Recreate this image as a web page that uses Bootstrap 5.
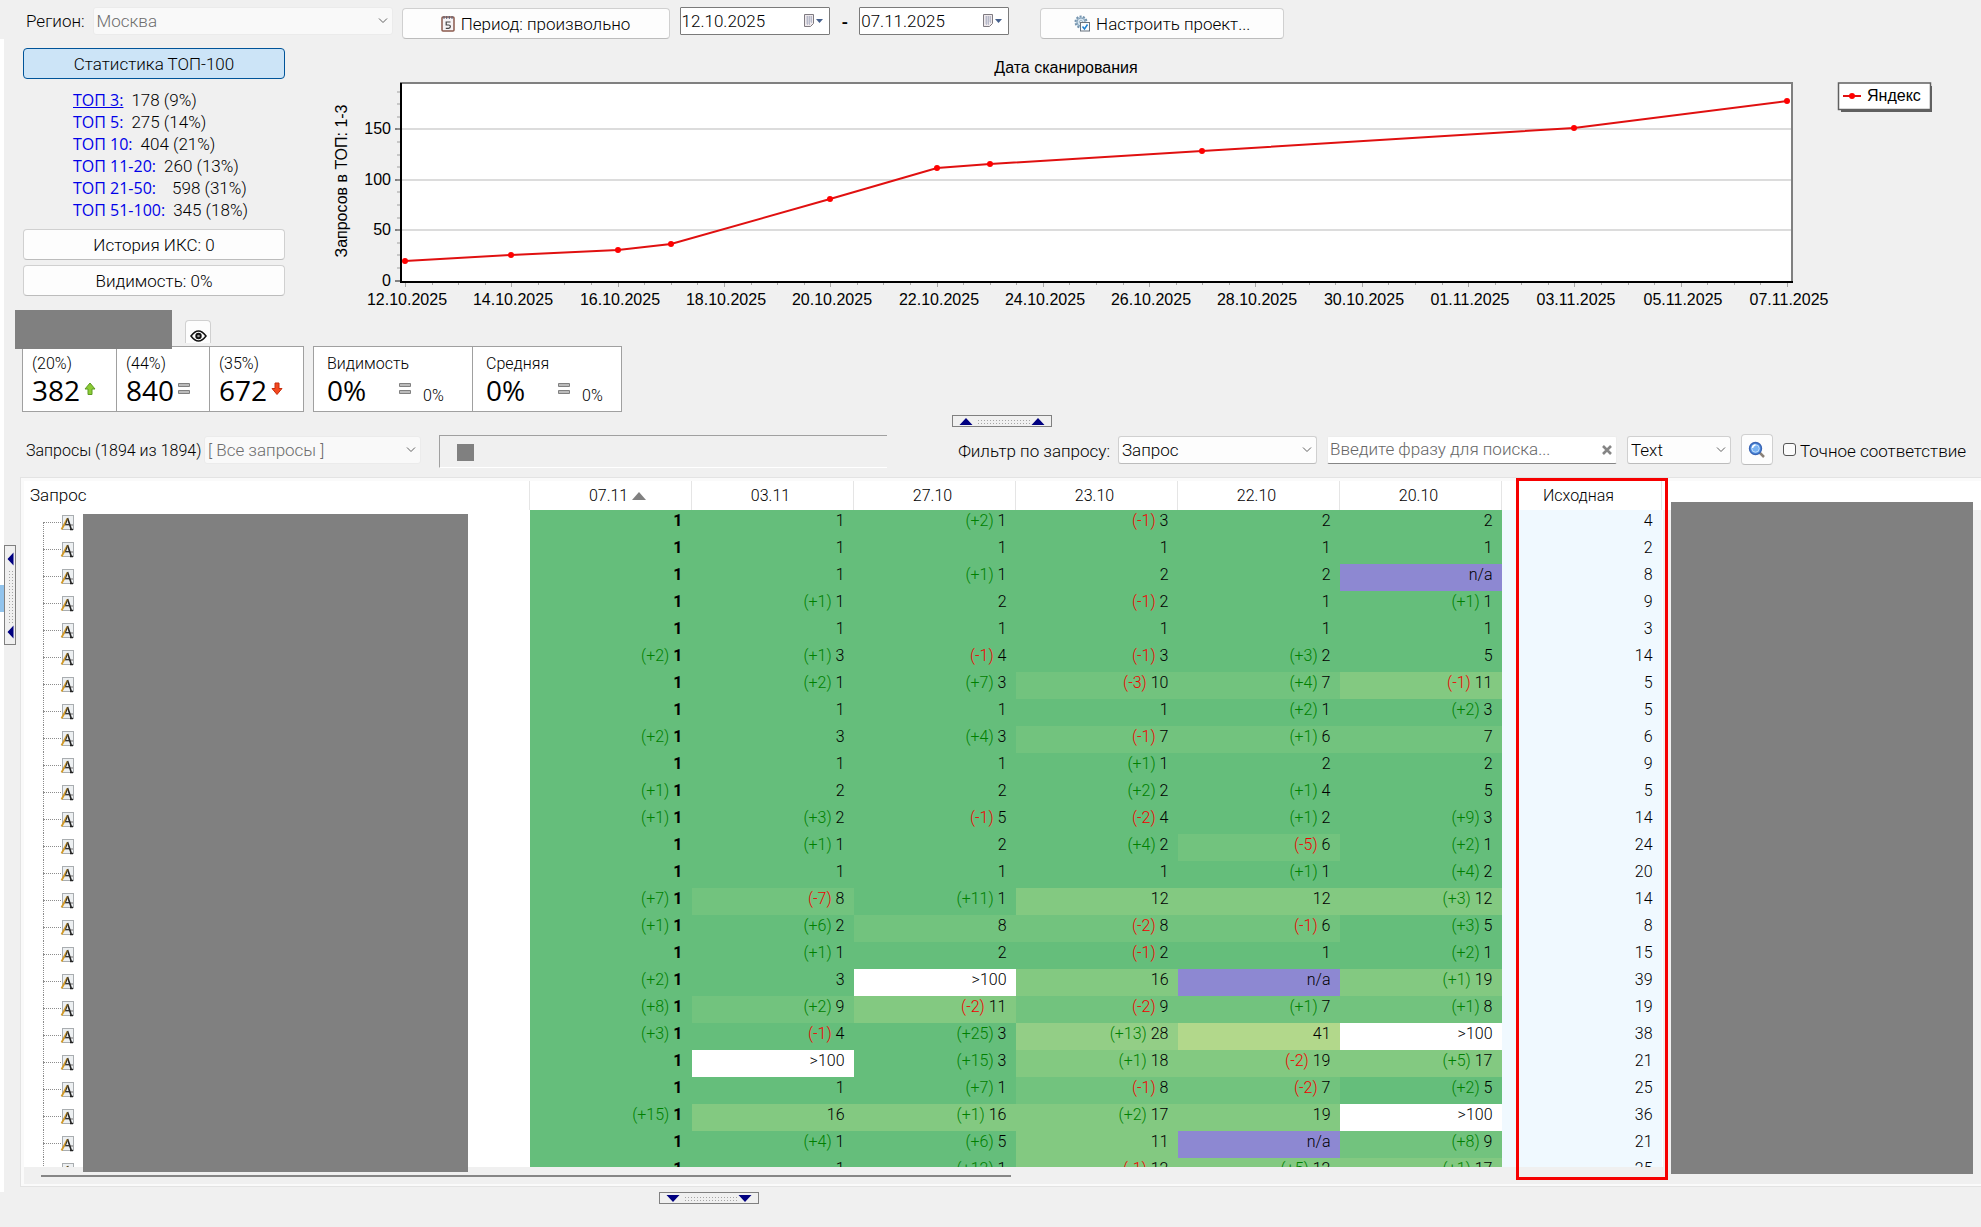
<!DOCTYPE html>
<html lang="ru">
<head>
<meta charset="utf-8">
<meta name="viewport" content="width=device-width, initial-scale=1">
<title>Позиции сайта</title>
<link href="https://cdn.jsdelivr.net/npm/bootstrap@5.3.0/dist/css/bootstrap.min.css" rel="stylesheet">
<style>
  body { background: #f0f0f0; color: #000; font: 300 17px/20px Roboto, "Open Sans", sans-serif; overflow: hidden; }
  .app { min-width: 1200px; }
  .gutter { width: 16px; position: relative; }
  .gutter-strip { position: absolute; left: 0; top: 39px; bottom: 0; width: 4px; background: #fff; }
  .gutter-mark { position: absolute; left: 0; top: 585px; width: 4px; height: 27px; background: #91c3ec; }
  .grip { position: relative; background: #f0f0f0; border: 1px solid #808080; padding: 0; display: block; flex: none; }
  .grip svg { display: block; }
  .grip-h { width: 100px; height: 12px; }
  .grip-v { width: 12px; height: 100px; margin-left: 4px; margin-bottom: 2px; }

  .ctl { font: inherit; color: #000; background-color: #fdfdfd; border: 1px solid #d0d0d0; border-bottom-color: #bcbcbc; border-radius: 4px; padding: 0; }
  .ctl-btn { height: 31px; display: flex; align-items: center; justify-content: center; gap: 6px; }
  .ctl-on { background: #cce4f7; border-color: #005499; }
  .ctl-select { height: 28px; border-radius: 3px; appearance: none; padding: 0 24px 0 3px; background: #fdfdfd url("data:image/svg+xml,%3Csvg xmlns='http://www.w3.org/2000/svg' width='10' height='6'%3E%3Cpath d='M1 .5l4 4 4-4' fill='none' stroke='%23606060'/%3E%3C/svg%3E") no-repeat right 4px center; }
  .ctl-select:disabled { color: #6d6d6d; background-color: #f9f9f9; border-color: #ebebeb; opacity: 1; }
  .date-box { width: 150px; height: 28px; background: #fff; border: 1px solid #7a7a7a; border-radius: 1px; }
  .date-box input { border: 0; outline: 0; background: none; font: inherit; font-size: 17px; width: 100px; padding: 0 0 0 1px; }
  .date-box button { border: 0; background: none; padding: 0; display: flex; margin-right: 6px; }

  .toolbar { padding: 7px 0 0 10px; height: 43px; }
  .side { width: 262px; margin: 6px 0 0 7px; }
  .top-list { margin: 10px 0 8px 50px; }
  .top-list li { height: 22px; line-height: 22px; display: flex; }
  .top-list a { font: 400 16px/22px "Open Sans", "Noto Sans", sans-serif; color: #0000e8; text-decoration: none; }
  .top-list a.current { text-decoration: underline; }
  .chart { font: 400 16px "Liberation Sans", Arial, sans-serif; }
  .masked { background: #808080; }
  .mask-title { width: 157px; height: 39px; margin: 0 0 -3px -1px; position: relative; z-index: 1; }
  .eye-btn { width: 26px; height: 23px; margin: 10px 0 0 13px; border-bottom: 0; border-radius: 4px 4px 0 0; padding: 7px 0 0; }
  .stat-row { padding-left: 6px; font-size: 16px; }
  .stat-group { background: #fff; border: 1px solid #a0a0a0; height: 66px; }
  .stat-cell { padding: 7px 0 0 9px; }
  .stat-cell + .stat-cell { border-left: 1px solid #a0a0a0; }
  .stat-main { font: 400 28px/32px "Open Sans", "Noto Sans", sans-serif; }
  .stat-wide { padding-left: 13px; }
  .stat-wide .stat-main { width: 72px; }

  .filters { height: 38px; padding: 0 15px 0 10px; }
  .filters label { padding-top: 2px; }
  .count-label { width: 178px; font-size: 16px; }
  .tag-panel { border: 1px solid #a0a0a0; border-right: 0; border-bottom-color: #fff; height: 33px; padding: 8px 17px; }
  .tag-box { width: 17px; height: 17px; }
  .find-box { height: 28px; background: #fff; border: 1px solid #ececec; border-bottom: 1px solid #868686; border-radius: 2px; }
  .find-box input { border: 0; outline: 0; background: none; font: inherit; padding: 0 0 2px 2px; min-width: 0; }
  .find-box input::placeholder { color: #666; opacity: 1; }
  .find-box button { border: 0; background: none; padding: 0 3px; display: flex; }
  .exact { width: 13px; height: 13px; margin: 0; appearance: none; background: #fbfbfb; border: 1px solid #555; border-radius: 3px; }

  .grid-panel { margin: 9px 0 5px 4px; border: 1px solid #e3e3e3; border-right: 0; padding: 3px 0 2px 3px; background: #fafafa; position: relative; }
  .grid-body { background: #fff; }
  .name-pane { width: 505px; position: relative; }
  .pane-head { height: 29px; line-height: 26px; padding: 1px 0 0 6px; }
  .tree { width: 59px; overflow: hidden; }
  .tree-row { height: 27px; position: relative; padding: 5px 0 0 35px; }
  .tree-row::before { content: ""; position: absolute; left: 19px; top: 0; height: 27px; border-left: 1px dotted #8c8c8c; }
  .tree-row:first-child::before { top: 13px; height: 14px; }
  .tree-row::after { content: ""; position: absolute; left: 19px; top: 13px; width: 18px; border-top: 1px dotted #8c8c8c; }
  .tree-row svg { display: block; position: relative; z-index: 1; }
  .mask-names { width: 385px; margin: 5px 0 -5px 0; z-index: 1; position: relative; }
  .pos-wrap { width: 1134px; overflow: hidden; }
  .pos { width: 1133px; table-layout: fixed; border-collapse: collapse; font-size: 16px; }
  .pos th { height: 29px; font-weight: 300; text-align: center; padding: 0 4px 0 0; border-left: 1px solid #e5e5e5; line-height: 20px; }
  .pos th:first-child { padding-left: 18px; }
  .pos th:last-child { border-right: 1px solid #e5e5e5; padding-right: 6px; }
  .pos td { height: 27px; padding: 0 9px 0 0; text-align: right; vertical-align: top; line-height: 22px; white-space: nowrap; }
  .pos td:first-child { font-weight: 700; }
  .pos span { font-weight: 300; }
  .pos .up { color: #008000; }
  .pos .down { color: #f00000; }
  .b0 { background: #65be7b; } .b1 { background: #72c37e; } .b2 { background: #83c981; }
  .b3 { background: #93ce86; } .b4 { background: #b2d88b; } .bx { background: #fff; }
  .bn { background: #8d88d2; } .bs { background: #f0f9ff; }
  .rest-pane { background: #f0f0f0; border-top: 29px solid #fff; }
  .mask-rest { margin: -8px 8px -7px 8px; position: relative; z-index: 1; }
  .scroll-x { height: 17px; background: #f0f0f0; padding: 8px 0 0 17px; }
  .scroll-thumb { width: 50%; height: 2px; background: #868686; }
  .frame-red { position: absolute; top: 0; left: 1495px; width: 152px; height: 702px; border: 3px solid #f60000; z-index: 2; }
</style>
</head>
<body>
<div class="app d-flex flex-column vh-100">
  <div class="d-flex flex-fill" style="min-height:0">
    <div class="gutter d-flex flex-column justify-content-center flex-shrink-0">
      <div class="gutter-strip"></div><div class="gutter-mark"></div>
      <button class="grip grip-v" aria-label="Свернуть панель слева">
        <svg width="10" height="98"><defs><pattern id="dv" width="3" height="3" patternUnits="userSpaceOnUse"><rect x="1" y="1" width="1" height="1" fill="#a5a5a5"/></pattern></defs><path d="M2.500 13l6-6.500v13zM2.500 86l6-6.500v13z" fill="#000080"/><rect x="2" y="24" width="6" height="54" fill="url(#dv)"/></svg>
      </button>
    </div>

    <main class="d-flex flex-column flex-fill" style="min-width:0">
      <div class="toolbar d-flex align-items-start">
        <label for="region" class="me-2 pt-1">Регион:</label>
        <select id="region" class="ctl ctl-select flex-shrink-0" disabled style="width:300px"><option>Москва</option></select>
        <button class="ctl ctl-btn flex-shrink-0" style="width:268px;margin:1px 10px 0 9px">
          <svg width="14" height="17" viewBox="0 0 14 17"><rect x="1" y="2" width="12" height="14" rx="1" fill="#f6f3f5" stroke="#8b5a4c" stroke-width="1.500"/><path d="M3 1v3M5.700 1v3M8.300 1v3M11 1v3" stroke="#555b70"/><path d="M9.500 7H5.200v3h2.400q1.800 0 1.800 1.600T7.500 13.300H4.800" fill="none" stroke="#444" stroke-width="1.200"/></svg>
          Период: произвольно</button>
        <div class="date-box d-flex align-items-center justify-content-between"><input aria-label="Дата с" value="12.10.2025"><button aria-label="Выбрать дату начала"><svg width="20" height="14" viewBox="0 0 20 14"><path d="M1.500.5h9v9l-3 3h-6z" fill="#eee9ec" stroke="#7e7a80"/><path d="M3 3h6M3 5h6M3 7h6M3 9h4M4.500 2v9M6.500 2v9M8.500 2v7" stroke="#a9afc2" stroke-width=".7"/><path d="M13 5h7l-3.500 4z" fill="#46608c"/></svg></button></div>
        <span class="fw-bold" style="padding:5px 11px 0 12px">-</span>
        <div class="date-box d-flex align-items-center justify-content-between"><input aria-label="Дата по" value="07.11.2025"><button aria-label="Выбрать дату конца"><svg width="20" height="14" viewBox="0 0 20 14"><path d="M1.500.5h9v9l-3 3h-6z" fill="#eee9ec" stroke="#7e7a80"/><path d="M3 3h6M3 5h6M3 7h6M3 9h4M4.500 2v9M6.500 2v9M8.500 2v7" stroke="#a9afc2" stroke-width=".7"/><path d="M13 5h7l-3.500 4z" fill="#46608c"/></svg></button></div>
        <button class="ctl ctl-btn flex-shrink-0" style="width:244px;margin:1px 0 0 31px">
          <svg width="16" height="17" viewBox="0 0 16 17"><circle cx="7" cy="7" r="5.500" fill="#c6d9e8" stroke="#7493ad" stroke-width="2" stroke-dasharray="2 1.400"/><circle cx="7" cy="7" r="4" fill="#d5e4ef" stroke="#87a4bb"/><circle cx="7" cy="7" r="1.500" fill="#fff" stroke="#87a4bb" stroke-width=".8"/><rect x="6.500" y="7.500" width="9" height="8.500" fill="#f8fbfd" stroke="#68737e"/><path d="M8.500 11.500l2 2.500 3-4.500" fill="none" stroke="#1c7fd0" stroke-width="1.500"/></svg>
          Настроить проект...</button>
      </div>

      <div class="d-flex align-items-start" style="height:268px">
        <div class="side flex-shrink-0">
          <button class="ctl ctl-btn ctl-on w-100">Статистика ТОП-100</button>
          <ul class="top-list list-unstyled">
            <li class="gap-2"><a class="current" href="#">ТОП 3:</a>178 (9%)</li>
            <li class="gap-2"><a href="#">ТОП 5:</a>275 (14%)</li>
            <li class="gap-2"><a href="#">ТОП 10:</a>404 (21%)</li>
            <li class="gap-2"><a href="#">ТОП 11-20:</a>260 (13%)</li>
            <li class="gap-3"><a href="#">ТОП 21-50:</a>598 (31%)</li>
            <li class="gap-2"><a href="#">ТОП 51-100:</a>345 (18%)</li>
          </ul>
          <button class="ctl ctl-btn w-100" style="margin-bottom:5px">История ИКС: 0</button>
          <button class="ctl ctl-btn w-100">Видимость: 0%</button>
        </div>
        <svg id="chart" class="chart flex-fill ms-auto" viewBox="285 43 1696 268" role="img" aria-label="Запросов в ТОП: 1-3 по датам сканирования"></svg>
      </div>

      <div class="d-flex">
        <div class="masked mask-title"></div>
        <button class="ctl eye-btn d-flex justify-content-center align-items-center" aria-label="Показать"><svg width="17" height="12" viewBox="0 0 17 12"><path d="M1 6q7.500-10 15 0q-7.500 10-15 0z" fill="#fff" stroke="#111" stroke-width="1.500"/><circle cx="8.500" cy="6" r="3.200" fill="#111"/><circle cx="8.500" cy="6" r="1.300" fill="#999"/></svg></button>
      </div>
      <div class="stat-row d-flex gap-2">
        <div class="stat-group d-flex">
          <div class="stat-cell" style="width:93px"><div>(20%)</div><div class="d-flex gap-1"><span class="stat-main">382</span><svg class="mt-2" width="12" height="14" viewBox="0 0 12 14"><path d="M6 1l5 6H8v5.500H4V7H1z" fill="#8ccb35" stroke="#5d9b22"/></svg></div></div>
          <div class="stat-cell" style="width:93px"><div>(44%)</div><div class="d-flex gap-1"><span class="stat-main">840</span><svg class="mt-2" width="12" height="14" viewBox="0 0 12 14"><path d="M.5 1.500h11v3H.5zM.5 8.500h11v3H.5z" fill="#bbb" stroke="#808080"/></svg></div></div>
          <div class="stat-cell" style="width:94px"><div>(35%)</div><div class="d-flex gap-1"><span class="stat-main">672</span><svg class="mt-2" width="12" height="14" viewBox="0 0 12 14"><path d="M6 12.500l5-6H8V1H4v5.500H1z" fill="#f4481e" stroke="#c62c0c"/></svg></div></div>
        </div>
        <div class="stat-group d-flex" style="margin-left:1px">
          <div class="stat-cell stat-wide" style="width:158px"><div>Видимость</div><div class="d-flex"><span class="stat-main">0%</span><svg class="mt-2" width="12" height="14" viewBox="0 0 12 14"><path d="M.5 1.500h11v3H.5zM.5 8.500h11v3H.5z" fill="#bbb" stroke="#808080"/></svg><span class="ms-2 ps-1 mt-2 pt-1">0%</span></div></div>
          <div class="stat-cell stat-wide" style="width:149px"><div>Средняя</div><div class="d-flex"><span class="stat-main">0%</span><svg class="mt-2" width="12" height="14" viewBox="0 0 12 14"><path d="M.5 1.500h11v3H.5zM.5 8.500h11v3H.5z" fill="#bbb" stroke="#808080"/></svg><span class="ms-2 ps-1 mt-2 pt-1">0%</span></div></div>
        </div>
      </div>

      <div class="d-flex justify-content-center" style="margin-top:3px;padding-left:6px">
        <button class="grip grip-h" aria-label="Свернуть верхнюю панель"><svg width="98" height="10"><defs><pattern id="dh" width="3" height="3" patternUnits="userSpaceOnUse"><rect x="1" y="1" width="1" height="1" fill="#a5a5a5"/></pattern></defs><path d="M13 2l6.500 7h-13zM85 2l6.500 7h-13z" fill="#000080"/><rect x="23" y="2" width="54" height="6" fill="url(#dh)"/></svg></button>
      </div>

      <div class="filters d-flex align-items-center" style="margin-top:4px">
        <label for="group" class="count-label text-nowrap flex-shrink-0">Запросы (1894 из 1894)</label>
        <select id="group" class="ctl ctl-select flex-shrink-0" disabled style="width:217px"><option>[ Все запросы ]</option></select>
        <div class="tag-panel flex-fill align-self-end" style="margin:0 71px 0 18px"><div class="masked tag-box"></div></div>
        <label for="field" class="text-nowrap">Фильтр по запросу:</label>
        <select id="field" class="ctl ctl-select ms-2 flex-shrink-0" style="width:199px"><option>Запрос</option></select>
        <div class="find-box d-flex align-items-center flex-shrink-0" style="width:290px;margin:0 10px"><input class="flex-fill" aria-label="Фраза" placeholder="Введите фразу для поиска..."><button aria-label="Очистить"><svg width="12" height="12" viewBox="0 0 12 12"><path d="M2 2l8 8M10 2l-8 8" stroke="#858585" stroke-width="2.600"/></svg></button></div>
        <select class="ctl ctl-select flex-shrink-0" aria-label="Тип" style="width:104px"><option>Text</option></select>
        <button class="ctl ctl-btn flex-shrink-0" style="width:32px;margin:0 10px" aria-label="Найти"><svg width="18" height="18" viewBox="0 0 18 18"><path d="M11.500 11.500l4.500 4.500" stroke="#8a8178" stroke-width="2.500"/><circle cx="7.500" cy="7.500" r="6" fill="#4f8fe0" stroke="#3a65b5" stroke-width="1.400"/><circle cx="7.500" cy="7.500" r="3.800" fill="#79b2f2" stroke="#c7e0fb"/><path d="M4.500 7q.3-2.700 3-3" stroke="#fff" stroke-width="1.500" fill="none"/></svg></button>
        <input type="checkbox" id="exact" class="exact flex-shrink-0"><label for="exact" class="ms-1 text-nowrap">Точное соответствие</label>
      </div>

      <section class="grid-panel d-flex flex-column flex-fill" style="min-height:0">
        <div class="grid-body d-flex flex-fill" style="min-height:0">
          <div class="name-pane d-flex flex-column flex-shrink-0">
            <div class="pane-head">Запрос</div>
            <div class="d-flex flex-fill" style="min-height:0"><div class="tree" id="tree"></div><div class="masked mask-names"></div></div>
          </div>
          <div class="pos-wrap flex-shrink-0">
            <table class="pos">
              <colgroup><col style="width:162px"><col style="width:162px"><col style="width:162px"><col style="width:162px"><col style="width:162px"><col style="width:162px"><col></colgroup>
              <thead><tr><th>07.11 <svg width="14" height="8" viewBox="0 0 14 8"><path d="M7 0l7 8H0z" fill="#808080"/></svg></th><th>03.11</th><th>27.10</th><th>23.10</th><th>22.10</th><th>20.10</th><th>Исходная</th></tr></thead>
              <tbody id="rows"></tbody>
            </table>
          </div>
          <div class="rest-pane flex-fill d-flex"><div class="masked mask-rest flex-fill"></div></div>
        </div>
        <div class="scroll-x flex-shrink-0"><div class="scroll-thumb"></div></div>
        <div class="frame-red"></div>
      </section>
    </main>
  </div>
  <div class="flex-shrink-0" style="height:35px;padding-left:659px">
    <button class="grip grip-h" aria-label="Свернуть нижнюю панель"><svg width="98" height="10"><path d="M13 9l6.500-7h-13zM85 9l6.500-7h-13z" fill="#000080"/><rect x="23" y="2" width="54" height="6" fill="url(#dh)"/></svg></button>
  </div>
</div>

<script src="https://cdn.jsdelivr.net/npm/bootstrap@5.3.0/dist/js/bootstrap.bundle.min.js"></script>
<script>
  // One line per query: "delta|position" for each scan date, then the source position
  const data = `1,1,+2|1,-1|3,2,2,4
1,1,1,1,1,1,2
1,1,+1|1,2,2,n/a,8
1,+1|1,2,-1|2,1,+1|1,9
1,1,1,1,1,1,3
+2|1,+1|3,-1|4,-1|3,+3|2,5,14
1,+2|1,+7|3,-3|10,+4|7,-1|11,5
1,1,1,1,+2|1,+2|3,5
+2|1,3,+4|3,-1|7,+1|6,7,6
1,1,1,+1|1,2,2,9
+1|1,2,2,+2|2,+1|4,5,5
+1|1,+3|2,-1|5,-2|4,+1|2,+9|3,14
1,+1|1,2,+4|2,-5|6,+2|1,24
1,1,1,1,+1|1,+4|2,20
+7|1,-7|8,+11|1,12,12,+3|12,14
+1|1,+6|2,8,-2|8,-1|6,+3|5,8
1,+1|1,2,-1|2,1,+2|1,15
+2|1,3,>100,16,n/a,+1|19,39
+8|1,+2|9,-2|11,-2|9,+1|7,+1|8,19
+3|1,-1|4,+25|3,+13|28,41,>100,38
1,>100,+15|3,+1|18,-2|19,+5|17,21
1,1,+7|1,-1|8,-2|7,+2|5,25
+15|1,16,+1|16,+2|17,19,>100,36
1,+4|1,+6|5,11,n/a,+8|9,21
1,1,+12|1,-1|12,+5|12,+1|17,25`.split("\n").map(r => r.split(","));
  const band = v => v === "n/a" ? "bn" : v === ">100" ? "bx" : v <= 5 ? "b0" : v <= 10 ? "b1" : v <= 20 ? "b2" : v <= 30 ? "b3" : "b4";
  document.getElementById("rows").innerHTML = data.map(r => "<tr>" + r.map((c, i) => {
    const [v, d] = c.split("|").reverse();
    const delta = d ? `<span class="${d[0] === "+" ? "up" : "down"}">(${d})</span> ` : "";
    return `<td class="${i === 6 ? "bs" : band(v)}">${delta}${v.replace(">", "&gt;")}</td>`;
  }).join("") + "</tr>").join("");
  document.getElementById("tree").innerHTML = data.map(() => `<div class="tree-row"><svg width="16" height="17" viewBox="0 0 16 17"><rect x="3.500" y="1.500" width="11" height="14" fill="#edf0f2" stroke="#a9adb0"/><path d="M5 11h9" stroke="#999" stroke-width="1.500"/><path d="M8.500 4l4 12M11 15.500h3" stroke="#222" stroke-width="1.600"/><path d="M8.500 4.500L2.500 15.500" stroke="#d29a28" stroke-width="1.800"/><path d="M8.500 4.500L6.500 10.500h4" stroke="#333" fill="none"/></svg></div>`).join("");

  // Chart: 12.10.2025 is at x = 405, one day is 1382 / 26 units wide; y = 282 is zero
  const dayW = 1382 / 26, px = d => Math.round(405 + d * dayW);
  let s = '<rect x="401" y="84" width="1391" height="199" fill="#fff"/>';
  [[0, 282], [50, 231], [100, 181], [150, 130]].forEach(([v, y]) => {
    if (v) s += `<path d="M402 ${y}H1791" stroke="#dcdcdc" stroke-width="2"/>`;
    s += `<path d="M395 ${y}h5" stroke="#808080" stroke-width="2"/><text x="391" y="${y + 5}" text-anchor="end">${v}</text>`;
  });
  for (let y = 269; y > 88; y -= 12.6) s += `<path d="M397 ${Math.round(y)}h3" stroke="#a0a0a0"/>`;
  for (let i = 0; i <= 52; i++) s += `<path d="M${px(i / 2)}.5 284v${i % 4 ? 2 : 4}" stroke="#a8a8a8"/>`;
  for (let d = 0; d <= 26; d += 2) {
    const t = new Date(2025, 9, 12 + d), p = n => String(n).padStart(2, "0");
    s += `<text x="${px(d) + 2}" y="306" text-anchor="middle">${p(t.getDate())}.${p(t.getMonth() + 1)}.2025</text>`;
  }
  s += '<path d="M400 84H1792V284" fill="none" stroke="#808080" stroke-width="2"/><path d="M401 84V283H1793" fill="none" stroke="#000" stroke-width="2"/>';
  const pts = [[0, 262], [2, 256], [4, 251], [5, 245], [8, 200], [10, 169], [11, 165], [15, 152], [22, 129], [26, 102]].map(([d, y]) => [px(d), y]);
  s += `<polyline points="${pts.join(" ")}" fill="none" stroke="#e01010" stroke-width="2"/>` + pts.map(([x, y]) => `<circle cx="${x}" cy="${y}" r="3" fill="#f00"/>`).join("");
  s += '<text x="1066" y="74" text-anchor="middle">Дата сканирования</text><text transform="translate(347 182) rotate(-90)" text-anchor="middle">Запросов в ТОП: 1-3</text>';
  s += '<rect x="1841" y="87" width="91" height="26" fill="#606060"/><rect x="1838.5" y="84" width="92" height="26.500" fill="#fff" stroke="#606060" stroke-width="1.500"/><path d="M1843 97h18" stroke="#e01010" stroke-width="2"/><circle cx="1852" cy="97" r="3" fill="#f00"/><text x="1867" y="102">Яндекс</text>';
  document.getElementById("chart").innerHTML = s;
</script>
</body>
</html>
